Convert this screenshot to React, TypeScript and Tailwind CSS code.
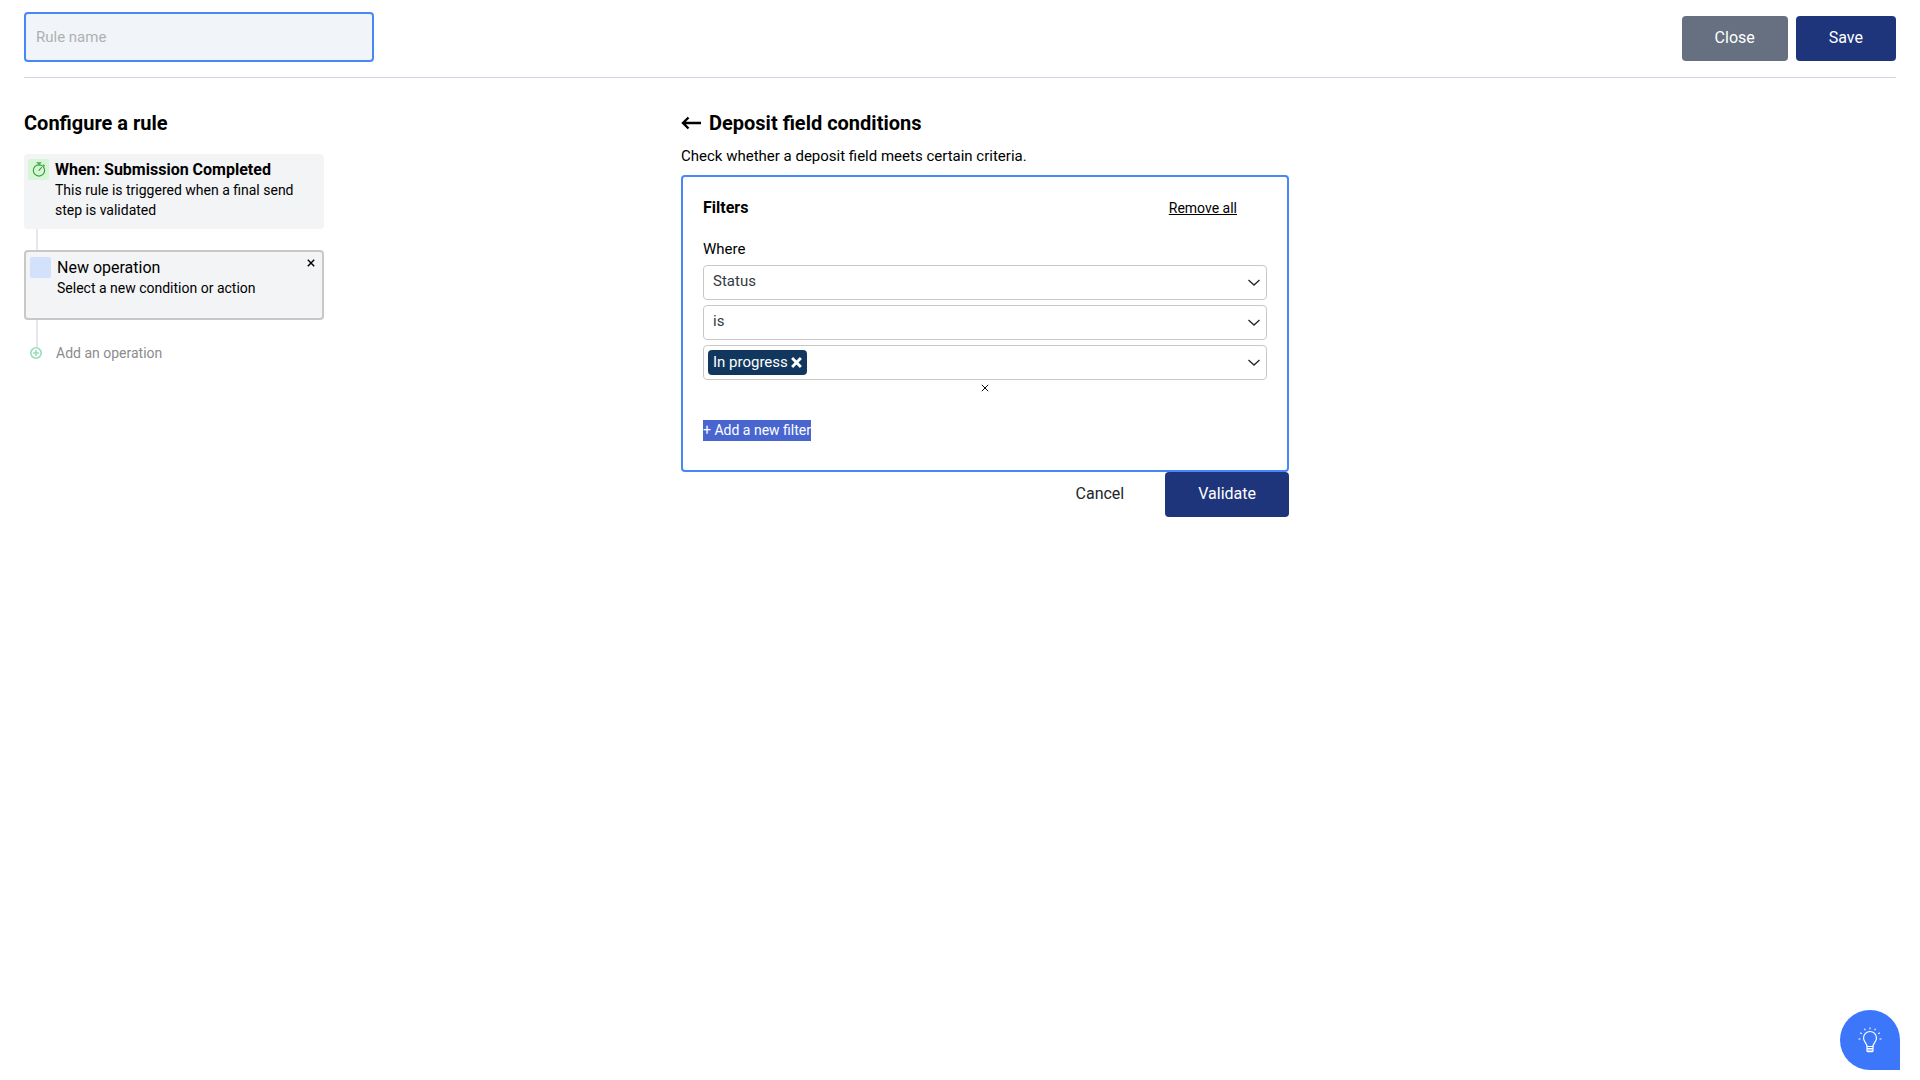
import { useState } from 'react';

const FIELDS = ['Status', 'Title', 'Deposit date'];
const OPERATORS = ['is', 'is not'];
const STATUSES = ['In progress', 'Completed', 'Refused'];

function CrossIcon({ className, strokeWidth }: { className: string; strokeWidth: number }) {
  return (
    <svg className={className} viewBox="0 0 10 10" fill="none" stroke="currentColor" strokeWidth={strokeWidth}>
      <path d="M1 1l8 8M9 1l-8 8" />
    </svg>
  );
}

function ChevronIcon() {
  return (
    <svg
      className="pointer-events-none h-3 w-3 text-[#212529]"
      viewBox="0 0 12 12"
      fill="none"
      stroke="currentColor"
      strokeWidth="1.3"
    >
      <path d="M0.5 3L6 8l5.500-5" />
    </svg>
  );
}

function StopwatchIcon() {
  return (
    <svg className="h-[15px] w-[15px] text-[#37a137]" viewBox="0 0 16 16" fill="none" stroke="currentColor" strokeWidth="1.2">
      <circle cx="8.500" cy="9" r="6" />
      <path d="M6.500 0.900h4M8.500 1v2M8.500 9l2.600-3M13.300 3.200l1 1" strokeLinecap="round" />
    </svg>
  );
}

function BulbIcon() {
  return (
    <svg className="h-[26px] w-6" viewBox="0 0 24 26" fill="none" stroke="#fff" strokeWidth="1.2">
      <path d="M9 19.500c0-3.500-3.500-4.500-3.500-8.500a6.500 6.500 0 0 1 13 0c0 4-3.500 5-3.500 8.500z" />
      <path d="M9 19.500v4.200c0 .6.400 1 1 1h4c.6 0 1-.4 1-1v-4.200M9 21.500h6M9 23h6" />
      <path d="M12 0.500v1.800M6.500 1.800l.8 1.500M17.500 1.800l-.8 1.500M2.200 5.800l1.500.9M21.800 5.800l-1.500.9M0.500 12h2M21.500 12h2" />
    </svg>
  );
}

function FilterSelect({ id, label, options, value, onChange }: {
  id: string;
  label: string;
  options: string[];
  value: string;
  onChange: (value: string) => void;
}) {
  return (
    <div className="grid h-[35px]">
      <select
        id={id}
        aria-label={label}
        value={value}
        onChange={(e) => onChange(e.target.value)}
        className="col-start-1 row-start-1 w-full appearance-none rounded border border-[#c8c8c8] bg-white px-[9px] pb-[3px] text-[15px] text-[#343a40]"
      >
        {options.map((option) => (
          <option key={option}>{option}</option>
        ))}
      </select>
      <span className="pointer-events-none col-start-1 row-start-1 mr-[7px] self-center justify-self-end">
        <ChevronIcon />
      </span>
    </div>
  );
}

function StatusPicker({ selected, onChange }: { selected: string[]; onChange: (values: string[]) => void }) {
  return (
    <div className="grid h-[35px] rounded border border-[#c8c8c8]">
      <div className="col-start-1 row-start-1 flex items-center gap-1 pl-1">
        {selected.map((status) => (
          <span key={status} className="flex h-[25px] items-center gap-[3px] rounded bg-[#12375f] px-[5px] text-[15px] text-white">
            {status}
            <button
              type="button"
              aria-label={`Remove ${status}`}
              onClick={() => onChange(selected.filter((s) => s !== status))}
            >
              <CrossIcon className="h-[11px] w-[11px]" strokeWidth={2.6} />
            </button>
          </span>
        ))}
        <select
          aria-label="Add a status"
          value=""
          onChange={(e) => onChange([...selected, e.target.value])}
          className="h-full flex-1 appearance-none bg-transparent"
        >
          <option value=""></option>
          {STATUSES.filter((s) => !selected.includes(s)).map((s) => (
            <option key={s}>{s}</option>
          ))}
        </select>
      </div>
      <span className="pointer-events-none col-start-1 row-start-1 mr-1.5 self-center justify-self-end">
        <ChevronIcon />
      </span>
    </div>
  );
}

function RuleSteps() {
  return (
    <section>
      <h2 className="text-[20px] leading-6 font-bold">Configure a rule</h2>

      <div className="mt-[19px] w-[300px]">
        <div className="flex h-[75px] gap-1.5 rounded bg-[#f3f4f6] px-1 pt-[5px]">
          <span className="flex h-[21px] w-[21px] shrink-0 items-center justify-center rounded-xs bg-[#d7f5d7]">
            <StopwatchIcon />
          </span>
          <div>
            <h3 className="text-base leading-[21px] font-bold">When: Submission Completed</h3>
            <p className="text-sm">This rule is triggered when a final send step is validated</p>
          </div>
        </div>

        <div className="ml-3 h-[21px] w-[2px] bg-[#e6e7ee]" />

        <div className="flex h-[70px] gap-1.5 rounded border-2 border-[#c8c8c8] bg-[#f3f4f6] px-1 pt-[5px]">
          <span className="h-[21px] w-[21px] shrink-0 rounded-xs bg-[#d3e1fc]" />
          <div className="flex-1">
            <h3 className="text-base leading-[21px]">New operation</h3>
            <p className="text-sm">Select a new condition or action</p>
          </div>
          <button type="button" aria-label="Remove operation" className="mt-0.5 mr-[3px] h-2">
            <CrossIcon className="h-2 w-2" strokeWidth={1.8} />
          </button>
        </div>

        <div className="ml-3 h-[27px] w-[2px] bg-[#e6e7ee]" />

        <button type="button" className="-mt-1 ml-1.5 flex items-center gap-[14px] text-sm text-[#8c8c8c]">
          <svg className="h-3 w-3" viewBox="0 0 12 12" fill="none" stroke="#96dfb6" strokeWidth="1.6">
            <circle cx="6" cy="6" r="5.200" />
            <path d="M6 3v6M3 6h6" />
          </svg>
          Add an operation
        </button>
      </div>
    </section>
  );
}

function DepositConditions() {
  const [field, setField] = useState('Status');
  const [operator, setOperator] = useState('is');
  const [statuses, setStatuses] = useState(['In progress']);

  return (
    <section className="ml-[25px] w-full">
      <div className="flex items-center gap-2">
        <button type="button" aria-label="Back">
          <svg className="h-4 w-5" viewBox="0 0 20 16" fill="none" stroke="currentColor" strokeWidth="2.400">
            <path d="M20 8H2M7.500 2.500L2 8l5.500 5.500" />
          </svg>
        </button>
        <h2 className="text-[20px] leading-6 font-bold">Deposit field conditions</h2>
      </div>
      <p className="mt-[9px] text-[15px] leading-6">Check whether a deposit field meets certain criteria.</p>

      <div className="mt-[7px] rounded border-2 border-[#4788f8] px-5 pt-[19px] pb-[29px]">
        <div className="flex items-center justify-between pr-[30px]">
          <h3 className="text-base leading-6 font-bold">Filters</h3>
          <button type="button" className="text-sm underline">Remove all</button>
        </div>

        <label htmlFor="filter-field" className="mt-[17px] block text-[15px] leading-6">Where</label>
        <div className="mt-1 flex flex-col gap-[5px]">
          <FilterSelect id="filter-field" label="Where" options={FIELDS} value={field} onChange={setField} />
          <FilterSelect id="filter-operator" label="Operator" options={OPERATORS} value={operator} onChange={setOperator} />
          <StatusPicker selected={statuses} onChange={setStatuses} />
        </div>
        <div className="flex h-4 items-center justify-center">
          <button type="button" aria-label="Remove filter">
            <CrossIcon className="h-2 w-2" strokeWidth={1.2} />
          </button>
        </div>

        <button type="button" className="mt-6 block h-[21px] bg-[#4966d0] pb-px text-sm text-white">
          + Add a new filter
        </button>
      </div>

      <div className="flex justify-end gap-2">
        <button type="button" className="h-[45px] rounded px-[33px] pb-0.5 text-base text-[#212529]">Cancel</button>
        <button type="button" className="h-[45px] rounded bg-[#1e347b] px-[33px] pb-0.5 text-base text-white">Validate</button>
      </div>
    </section>
  );
}

function App() {
  const [name, setName] = useState('');

  return (
    <div className="min-h-screen bg-white px-6 font-['Roboto',sans-serif] text-black">
      <header className="flex items-start justify-between border-b border-[#d4d4e3] pt-3 pb-[15px]">
        <input
          type="text"
          aria-label="Rule name"
          placeholder="Rule name"
          value={name}
          onChange={(e) => setName(e.target.value)}
          className="h-[50px] w-[350px] rounded border-2 border-[#4788f8] bg-[#f1f5f9] px-[10px] text-[15px] outline-none placeholder:text-[#b0b0b0]"
        />
        <div className="mt-1 flex gap-2">
          <button type="button" className="h-[45px] rounded bg-[#667080] px-[33px] pb-0.5 text-base text-white">Close</button>
          <button type="button" className="h-[45px] rounded bg-[#1e347b] px-[33px] pb-0.5 text-base text-white">Save</button>
        </div>
      </header>

      <main className="grid grid-cols-3 gap-6 pt-[33px]">
        <RuleSteps />
        <DepositConditions />
      </main>

      <button
        type="button"
        aria-label="Help"
        className="fixed right-5 bottom-[10px] flex h-[60px] w-[60px] items-center justify-center rounded-full rounded-br-lg bg-[#3b76fb]"
      >
        <BulbIcon />
      </button>
    </div>
  );
}

export default App;
